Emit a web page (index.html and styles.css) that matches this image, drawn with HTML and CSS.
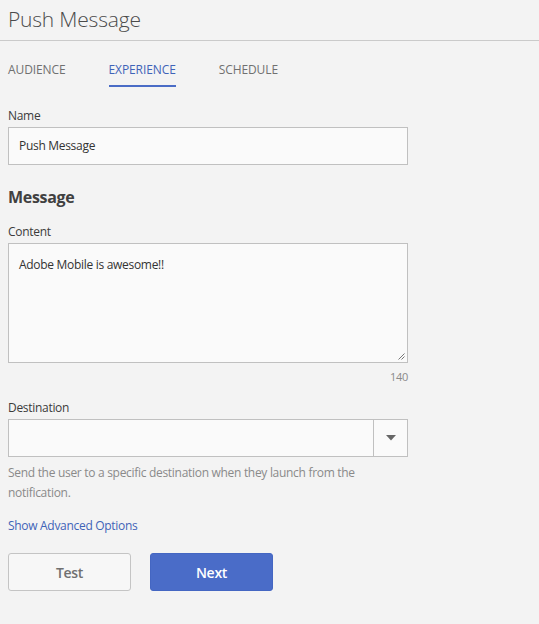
FILE: index.html
```html
<!DOCTYPE html>
<html>
<head>
<meta charset="utf-8">
<link rel="stylesheet" href="styles.css">
</head>
<body>
<header class="header">
  <h1 class="title">Push Message</h1>
</header>
<nav class="tabs">
  <span class="tab">AUDIENCE</span>
  <span class="tab active">EXPERIENCE</span>
  <span class="tab">SCHEDULE</span>
</nav>
<main class="form">
  <label class="label">Name</label>
  <div class="input">Push Message</div>

  <h2 class="section">Message</h2>

  <label class="label">Content</label>
  <div class="textarea">
    Adobe Mobile is awesome!!
    <svg class="grip" width="7" height="7" viewBox="0 0 7 7"><path d="M0.5 6.5 L6.5 0.5 M3.5 6.5 L6.5 3.5" stroke="#777" stroke-width="1" fill="none"/></svg>
  </div>
  <div class="counter">140</div>

  <label class="label dest">Destination</label>
  <div class="select">
    <div class="select-value"></div>
    <div class="select-btn">
      <svg width="10" height="6" viewBox="0 0 10 6"><path d="M0 0 L10 0 L5 5.5 Z" fill="#666"/></svg>
    </div>
  </div>
  <p class="help">Send the user to a specific destination when they launch from the notification.</p>

  <a class="link">Show Advanced Options</a>

  <div class="actions">
    <button class="btn secondary">Test</button>
    <button class="btn primary">Next</button>
  </div>
</main>
</body>
</html>
```

FILE: styles.css
```css
html, body {
  margin: 0;
  padding: 0;
  background: #f3f3f3;
  font-family: "Open Sans", "Liberation Sans", sans-serif;
  color: #4b4b4b;
}
.header {
  border-bottom: 1px solid #cacaca;
  height: 41px;
  box-sizing: border-box;
  padding: 4px 8px 0;
}
.title {
  margin: 0;
  font-weight: 300;
  font-size: 21px;
  line-height: 30px;
  color: #4b4b4b;
  letter-spacing: -0.2px;
}
.tabs {
  display: flex;
  padding: 0 8px;
  gap: 43px;
  height: 47px;
  align-items: stretch;
}
.tab {
  font-size: 12px;
  color: #707070;
  padding-top: 20px;
  box-sizing: border-box;
  letter-spacing: -0.1px;
}
.tab.active {
  color: #3f63b8;
  border-bottom: 2px solid #4a6cc6;
  height: 46px;
}
.form {
  padding: 20px 8px 0;
  width: 400px;
  display: flex;
  flex-direction: column;
  letter-spacing: -0.3px;
}
.label {
  font-size: 12px;
  line-height: 16px;
  color: #3b3b3b;
  margin-bottom: 3px;
}
.input {
  height: 38px;
  box-sizing: border-box;
  border: 1px solid #c0c0c0;
  background: #fafafa;
  font-size: 12px;
  line-height: 36px;
  padding: 0 10px;
  color: #333;
}
.section {
  margin: 21px 0 16px;
  font-size: 16px;
  font-weight: 700;
  line-height: 22px;
  color: #404040;
  letter-spacing: -0.3px;
}
.textarea {
  position: relative;
  height: 120px;
  box-sizing: border-box;
  border: 1px solid #c0c0c0;
  background: #fafafa;
  font-size: 12px;
  line-height: 16px;
  padding: 13px 10px;
  color: #333;
}
.grip {
  position: absolute;
  right: 2px;
  bottom: 2px;
}
.counter {
  text-align: right;
  font-size: 11px;
  color: #8a8a8a;
  line-height: 16px;
  margin-top: 6px;
}
.dest {
  margin-top: 15px;
}
.select {
  display: flex;
  height: 38px;
  box-sizing: border-box;
  border: 1px solid #c0c0c0;
  background: #fafafa;
}
.select-value {
  flex: 1;
}
.select-btn {
  width: 33px;
  border-left: 1px solid #c0c0c0;
  display: flex;
  align-items: center;
  justify-content: center;
}
.help {
  margin: 6px 0 0;
  font-size: 12px;
  line-height: 20px;
  color: #8a8a8a;
}
.link {
  margin-top: 15px;
  font-size: 12px;
  line-height: 16px;
  color: #3f63b8;
}
.actions {
  display: flex;
  gap: 19px;
  margin-top: 19px;
}
.btn {
  width: 123px;
  height: 38px;
  box-sizing: border-box;
  border-radius: 3px;
  font-family: inherit;
  font-size: 14px;
  font-weight: 600;
  padding: 0;
  letter-spacing: -0.3px;
}
.btn.secondary {
  background: #f7f7f7;
  border: 1px solid #c4c4c4;
  color: #707070;
}
.btn.primary {
  background: #4a6cc8;
  border: 1px solid #4466c2;
  color: #ffffff;
}
```
